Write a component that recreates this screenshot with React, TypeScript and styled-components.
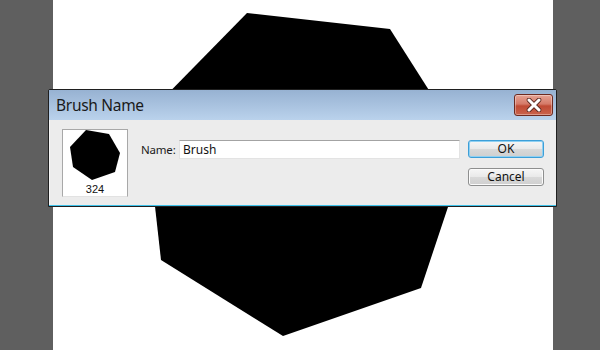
import React from "react";
import styled, { createGlobalStyle } from "styled-components";

const GlobalStyle = createGlobalStyle`
  html, body {
    margin: 0;
    padding: 0;
    background: #5f5f5f;
  }
  body {
    font-family: "Noto Sans", "DejaVu Sans", sans-serif;
  }
`;

const Workspace = styled("div")`
  position: relative;
  width: 600px;
  height: 350px;
  overflow: hidden;
  display: grid;
  grid-template-columns: 53px 500px 1fr;
  background: #5f5f5f;
`;

const Canvas = styled("div")`
  grid-column: 2;
  background: #ffffff;
  height: 350px;
`;

const Dialog = styled("div")`
  position: absolute;
  left: 48px;
  top: 89px;
  width: 509px;
  height: 118px;
  box-sizing: border-box;
  border: 1px solid #1f1f1f;
  border-radius: 2px 2px 0 0;
  display: flex;
  flex-direction: column;
`;

const TitleBar = styled("div")`
  height: 30px;
  flex: none;
  display: flex;
  align-items: center;
  justify-content: space-between;
  padding: 0 3px 0 7px;
  background: linear-gradient(#97b2d2, #bad2ec);
`;

const Title = styled("span")`
  font-family: "Noto Sans", sans-serif;
  font-size: 15.5px;
  color: #1a1a1a;
  letter-spacing: -0.3px;
`;

const CloseButton = styled("button")`
  width: 39px;
  height: 22px;
  padding: 0;
  border: 1px solid #6d2a20;
  border-radius: 3px;
  background: linear-gradient(
    #e6a394 0%,
    #d57a68 45%,
    #c04a34 55%,
    #c9634c 100%
  );
  box-shadow: inset 0 0 0 1px rgba(255, 255, 255, 0.35);
  display: flex;
  align-items: center;
  justify-content: center;
`;

const Body = styled("div")`
  flex: 1;
  display: flex;
  align-items: flex-start;
  padding: 9px 12px 0 13px;
  background: #ececec;
  box-shadow: inset 0 -1px #3ec2ea, inset 1px 0 #f6f6f6;
`;

const Preview = styled("div")`
  width: 66px;
  height: 68px;
  box-sizing: border-box;
  background: #ffffff;
  border: 1px solid #a8a8a8;
  border-bottom-color: #e2e2e2;
  display: flex;
  flex-direction: column;
  align-items: center;
`;

const PreviewCount = styled("span")`
  font-family: "Liberation Sans", sans-serif;
  font-size: 11px;
  line-height: 12px;
  color: #111;
  margin-top: 2px;
`;

const NameRow = styled("div")`
  display: flex;
  align-items: center;
  margin: 11px 0 0 13px;
  gap: 6px;
`;

const Label = styled("label")`
  width: 32px;
  white-space: nowrap;
  font-family: "Noto Sans", sans-serif;
  font-size: 11.5px;
  letter-spacing: -0.2px;
  color: #1a1a1a;
`;

const TextInput = styled("input")`
  width: 281px;
  height: 19px;
  box-sizing: border-box;
  border: 1px solid #e3e3e3;
  border-top-color: #a3a3a3;
  background: #ffffff;
  padding: 0 3px;
  font-family: "Noto Sans", sans-serif;
  font-size: 12px;
  color: #111;
  outline: none;
`;

const ButtonColumn = styled("div")`
  margin: 11px 0 0 auto;
  display: flex;
  flex-direction: column;
  gap: 10px;
`;

const Button = styled("button")<{ $primary?: boolean }>`
  width: 76px;
  height: 18px;
  box-sizing: border-box;
  padding: 0;
  border: 1px solid ${(p) => (p.$primary ? "#3d9fd8" : "#8e8f8f")};
  border-radius: 3px;
  background: linear-gradient(#f6f6f6 0%, #e9e9e9 50%, #d9d9d9 51%, #cfcfcf 100%);
  box-shadow: ${(p) =>
    p.$primary ? "inset 0 0 0 1px #8fd0f2" : "inset 0 0 0 1px #fbfbfb"};
  font-family: "Noto Sans", sans-serif;
  font-size: 12px;
  line-height: 14px;
  color: #111;
`;

const bigShape = "247,13 390,29 467,150 421,288 283,336 161,260 145,117";
const smallShape = "23,0 46,4 57,23 52,42 29,50 10,37 7,17";

const App = (): JSX.Element => {
  return (
    <Workspace>
      <GlobalStyle />
      <Canvas>
        <svg width="500" height="350" viewBox="53 0 500 350">
          <polygon points={bigShape} fill="#000" />
        </svg>
      </Canvas>

      <Dialog>
        <TitleBar>
          <Title>Brush Name</Title>
          <CloseButton aria-label="Close">
            <svg width="16" height="14" viewBox="0 0 16 14">
              <path
                d="M3 2 L13 12 M13 2 L3 12"
                stroke="#5a2a22"
                strokeWidth="4.6"
                strokeLinecap="round"
              />
              <path
                d="M3 2 L13 12 M13 2 L3 12"
                stroke="#ffffff"
                strokeWidth="3"
                strokeLinecap="round"
              />
            </svg>
          </CloseButton>
        </TitleBar>

        <Body>
          <Preview>
            <svg width="64" height="51" viewBox="0 0 64 51">
              <polygon points={smallShape} fill="#000" />
            </svg>
            <PreviewCount>324</PreviewCount>
          </Preview>

          <NameRow>
            <Label htmlFor="brush-name">Name:</Label>
            <TextInput id="brush-name" defaultValue="Brush" />
          </NameRow>

          <ButtonColumn>
            <Button $primary>OK</Button>
            <Button>Cancel</Button>
          </ButtonColumn>
        </Body>
      </Dialog>
    </Workspace>
  );
};

export default App;
